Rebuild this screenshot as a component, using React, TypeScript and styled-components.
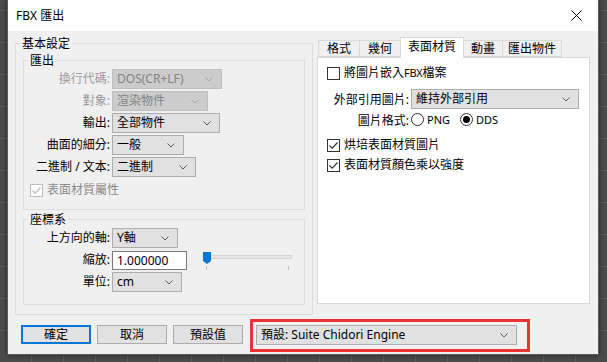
import React from 'react';
import styled, { createGlobalStyle } from 'styled-components';

const GlobalStyle = createGlobalStyle`
  html, body {
    margin: 0;
    padding: 0;
  }
  body {
    background-color: #4b4b4b;
    background-image:
      repeating-linear-gradient(90deg, transparent 0 31px, #5c5c5c 31px 32px),
      repeating-linear-gradient(0deg, transparent 0 31px, #5c5c5c 31px 32px);
    font-family: "Noto Sans", "Noto Sans CJK TC", sans-serif;
    font-size: 12px;
    color: #000;
  }
`;

const Page = styled.div`
  height: 362px;
  padding-left: 7px;
  overflow: hidden;
`;

const Dialog = styled.div`
  width: 592px;
  height: 355px;
  box-sizing: border-box;
  background: #f0f0f0;
  border: 1px solid #5a5a5a;
  border-top: none;
  box-shadow: 0 0 6px rgba(0, 0, 0, 0.5);
  display: flex;
  flex-direction: column;
`;

const TitleBar = styled.div`
  height: 31px;
  background: #fff;
  display: flex;
  align-items: center;
  padding: 0 16px 0 8px;
`;

const Title = styled.span`
  flex: 1;
  line-height: 14px;
`;

const Body = styled.div`
  display: flex;
  gap: 4px;
  padding: 6px 8px 0 7px;
`;

const LeftColumn = styled.div`
  width: 298px;
  padding-top: 6px;
`;

const Group = styled.div<{ $h: number; $pt: number }>`
  position: relative;
  box-sizing: border-box;
  height: ${p => p.$h}px;
  border: 1px solid #dcdcdc;
  padding: ${p => p.$pt}px 7px 0 7px;
`;

const SubGroup = styled.div<{ $h: number; $mt?: number }>`
  position: relative;
  box-sizing: border-box;
  height: ${p => p.$h}px;
  margin-top: ${p => p.$mt ?? 0}px;
  border: 1px solid #dcdcdc;
  padding-top: 8px;
`;

const Legend = styled.span`
  position: absolute;
  top: -8px;
  left: 4px;
  padding: 0 2px;
  background: #f0f0f0;
  line-height: 15px;
`;

const FormGrid = styled.div`
  display: grid;
  grid-template-columns: 86px 1fr;
  column-gap: 2px;
  row-gap: 2px;
  align-items: center;
`;

const Label = styled.span<{ $disabled?: boolean }>`
  text-align: right;
  white-space: nowrap;
  line-height: 20px;
  color: ${p => (p.$disabled ? '#9a9a9a' : '#000')};
`;

const ComboBox = styled.div<{ $w: number; $disabled?: boolean }>`
  width: ${p => p.$w}px;
  height: 20px;
  box-sizing: border-box;
  display: flex;
  align-items: center;
  padding-left: 4px;
  border: 1px solid ${p => (p.$disabled ? '#bfbfbf' : '#adadad')};
  background: ${p => (p.$disabled ? '#cccccc' : '#e1e1e1')};
  color: ${p => (p.$disabled ? '#838383' : '#000')};
  white-space: nowrap;
  line-height: 18px;
`;

const ComboText = styled.span`
  flex: 1;
  overflow: hidden;
`;

const Chevron = styled.svg`
  width: 8px;
  height: 5px;
  margin: 0 8px 0 4px;
  flex: none;
`;

const CheckRow = styled.label<{ $mt?: number; $disabled?: boolean }>`
  display: flex;
  align-items: center;
  gap: 4px;
  height: 14px;
  margin-top: ${p => p.$mt ?? 0}px;
  color: ${p => (p.$disabled ? '#8a8a8a' : '#000')};
  line-height: 14px;
  white-space: nowrap;
`;

const Box = styled.span<{ $disabled?: boolean }>`
  width: 13px;
  height: 13px;
  box-sizing: border-box;
  border: 1px solid ${p => (p.$disabled ? '#bcbcbc' : '#333')};
  background: #fff;
  display: flex;
  align-items: center;
  justify-content: center;
  flex: none;
`;

const CheckIndent = styled.div`
  padding-left: 6px;
`;

const ScaleRow = styled.div`
  display: flex;
  align-items: flex-start;
  height: 20px;
`;

const NumberInput = styled.div`
  width: 75px;
  height: 19px;
  box-sizing: border-box;
  border: 1px solid #7a7a7a;
  background: #fff;
  padding-left: 4px;
  line-height: 17px;
  margin-top: 1px;
`;

const Slider = styled.div`
  position: relative;
  width: 89px;
  margin-left: 16px;
  padding-top: 5px;
`;

const Track = styled.div`
  height: 4px;
  box-sizing: border-box;
  background: #e7e7e7;
  border: 1px solid #d4d4d4;
`;

const Thumb = styled.div`
  position: absolute;
  left: 0;
  top: 2px;
  width: 8px;
  height: 12px;
  background: #0078d7;
  clip-path: polygon(0 0, 100% 0, 100% 75%, 50% 100%, 0 75%);
`;

const Ticks = styled.div`
  display: flex;
  justify-content: space-between;
  padding: 0 3px;
  margin-top: 7px;
`;

const Tick = styled.span`
  width: 1px;
  height: 4px;
  background: #bdbdbd;
`;

const RightColumn = styled.div`
  width: 273px;
  display: flex;
  flex-direction: column;
`;

const TabStrip = styled.div`
  display: flex;
  align-items: flex-end;
  height: 20px;
  padding-left: 2px;
`;

const Tab = styled.div<{ $w: number; $active?: boolean }>`
  position: relative;
  z-index: ${p => (p.$active ? 1 : 0)};
  width: ${p => p.$w}px;
  height: ${p => (p.$active ? 21 : 17)}px;
  box-sizing: border-box;
  margin-left: -1px;
  margin-bottom: ${p => (p.$active ? -1 : 0)}px;
  border: 1px solid #d9d9d9;
  border-bottom: ${p => (p.$active ? 'none' : '1px solid #d9d9d9')};
  background: ${p => (p.$active ? '#fff' : '#f0f0f0')};
  text-align: center;
  line-height: ${p => (p.$active ? 17 : 15)}px;
  white-space: nowrap;
`;

const TabPanel = styled.div`
  height: 247px;
  box-sizing: border-box;
  border: 1px solid #d9d9d9;
  background: #fff;
  padding: 8px 10px 0 9px;
`;

const PanelRow = styled.div<{ $mt: number; $h: number }>`
  display: flex;
  align-items: center;
  gap: 2px;
  height: ${p => p.$h}px;
  margin-top: ${p => p.$mt}px;
`;

const PanelLabel = styled.span`
  width: 82px;
  text-align: right;
  white-space: nowrap;
`;

const Small = styled.span`
  font-size: 11px;
  letter-spacing: -0.3px;
`;

const RadioGroup = styled.div`
  display: flex;
  align-items: center;
  gap: 10px;
`;

const RadioOption = styled.label`
  display: flex;
  align-items: center;
  gap: 3px;
  font-size: 11px;
`;

const RadioCircle = styled.span<{ $checked?: boolean }>`
  width: 13px;
  height: 13px;
  box-sizing: border-box;
  border: 1px solid #333;
  border-radius: 50%;
  background: #fff;
  display: flex;
  align-items: center;
  justify-content: center;

  &::after {
    content: '';
    width: 7px;
    height: 7px;
    border-radius: 50%;
    background: ${p => (p.$checked ? '#000' : 'transparent')};
  }
`;

const Footer = styled.div`
  display: flex;
  align-items: flex-start;
  gap: 6px;
  padding: 4px 0 0 13px;
`;

const Button = styled.div<{ $default?: boolean }>`
  width: 70px;
  height: 19px;
  box-sizing: border-box;
  margin-top: 6px;
  border: ${p => (p.$default ? '2px solid #0078d7' : '1px solid #adadad')};
  background: #e1e1e1;
  display: flex;
  align-items: center;
  justify-content: center;
  line-height: 14px;
`;

const Highlight = styled.div`
  margin-left: 1px;
  border: 3px solid #ea3434;
  padding: 3px 10px 4px 3px;
`;

const Arrow: React.FC<{ disabled?: boolean }> = ({ disabled }) => (
  <Chevron viewBox="0 0 8 5">
    <path d="M0.5 0.5 L4 4 L7.5 0.5" fill="none" stroke={disabled ? '#a4a4a4' : '#5a5a5a'} strokeWidth="1" />
  </Chevron>
);

const Combo: React.FC<{ w: number; text: React.ReactNode; disabled?: boolean }> = ({ w, text, disabled }) => (
  <ComboBox $w={w} $disabled={disabled}>
    <ComboText>{text}</ComboText>
    <Arrow disabled={disabled} />
  </ComboBox>
);

const Check: React.FC<{ checked?: boolean; disabled?: boolean; mt?: number; children: React.ReactNode }> = ({
  checked,
  disabled,
  mt,
  children,
}) => (
  <CheckRow $mt={mt} $disabled={disabled}>
    <Box $disabled={disabled}>
      {checked && (
        <svg width="11" height="11" viewBox="0 0 11 11">
          <path d="M1.5 5.5 L4.2 8.2 L9.5 2.5" fill="none" stroke={disabled ? '#bcbcbc' : '#333'} strokeWidth="1.2" />
        </svg>
      )}
    </Box>
    <span>{children}</span>
  </CheckRow>
);

const App: React.FC = () => {
  return (
    <>
      <GlobalStyle />
      <Page>
        <Dialog>
          <TitleBar>
            <Title>FBX 匯出</Title>
            <svg width="11" height="11" viewBox="0 0 11 11">
              <path d="M0.5 0.5 L10.5 10.5 M10.5 0.5 L0.5 10.5" stroke="#000" strokeWidth="1" />
            </svg>
          </TitleBar>
          <Body>
            <LeftColumn>
              <Group $h={272} $pt={16}>
                <Legend>基本設定</Legend>
                <SubGroup $h={150}>
                  <Legend>匯出</Legend>
                  <FormGrid>
                    <Label $disabled>換行代碼:</Label>
                    <Combo w={110} text="DOS(CR+LF)" disabled />
                    <Label $disabled>對象:</Label>
                    <Combo w={96} text="渲染物件" disabled />
                    <Label>輸出:</Label>
                    <Combo w={108} text="全部物件" />
                    <Label>曲面的細分:</Label>
                    <Combo w={72} text="一般" />
                    <Label>二進制 / 文本:</Label>
                    <Combo w={84} text="二進制" />
                  </FormGrid>
                  <CheckIndent>
                    <Check checked disabled mt={6}>表面材質屬性</Check>
                  </CheckIndent>
                </SubGroup>
                <SubGroup $h={86} $mt={9}>
                  <Legend>座標系</Legend>
                  <FormGrid>
                    <Label>上方向的軸:</Label>
                    <Combo w={66} text="Y軸" />
                    <Label>縮放:</Label>
                    <ScaleRow>
                      <NumberInput>1.000000</NumberInput>
                      <Slider>
                        <Track />
                        <Thumb />
                        <Ticks>
                          <Tick />
                          <Tick />
                        </Ticks>
                      </Slider>
                    </ScaleRow>
                    <Label>單位:</Label>
                    <Combo w={70} text="cm" />
                  </FormGrid>
                </SubGroup>
              </Group>
            </LeftColumn>
            <RightColumn>
              <TabStrip>
                <Tab $w={42}>格式</Tab>
                <Tab $w={42}>幾何</Tab>
                <Tab $w={64} $active>表面材質</Tab>
                <Tab $w={40}>動畫</Tab>
                <Tab $w={60}>匯出物件</Tab>
              </TabStrip>
              <TabPanel>
                <Check>
                  將圖片嵌入<Small>FBX</Small>檔案
                </Check>
                <PanelRow $mt={9} $h={20}>
                  <PanelLabel>外部引用圖片:</PanelLabel>
                  <Combo w={168} text="維持外部引用" />
                </PanelRow>
                <PanelRow $mt={2} $h={17}>
                  <PanelLabel>圖片格式:</PanelLabel>
                  <RadioGroup>
                    <RadioOption>
                      <RadioCircle />
                      PNG
                    </RadioOption>
                    <RadioOption>
                      <RadioCircle $checked />
                      DDS
                    </RadioOption>
                  </RadioGroup>
                </PanelRow>
                <Check checked mt={10}>烘培表面材質圖片</Check>
                <Check checked mt={6}>表面材質顏色乘以強度</Check>
              </TabPanel>
            </RightColumn>
          </Body>
          <Footer>
            <Button $default>確定</Button>
            <Button>取消</Button>
            <Button>預設值</Button>
            <Highlight>
              <Combo w={261} text="預設: Suite Chidori Engine" />
            </Highlight>
          </Footer>
        </Dialog>
      </Page>
    </>
  );
};

export default App;
